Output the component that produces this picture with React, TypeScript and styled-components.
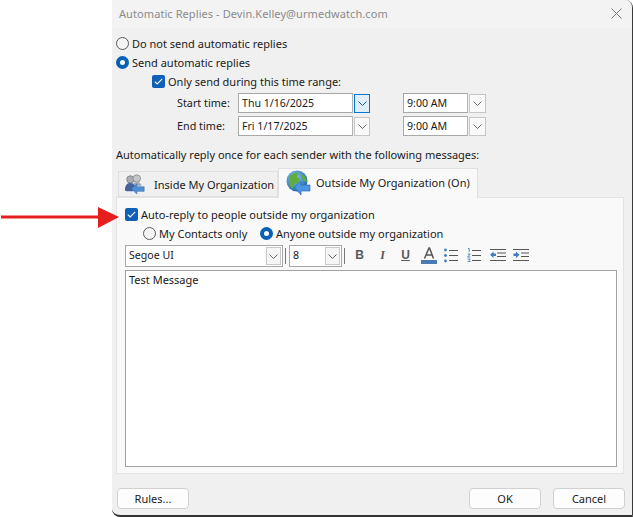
import React from "react";
import styled, { createGlobalStyle } from "styled-components";

const Global = createGlobalStyle`
  html, body { margin: 0; padding: 0; background: #fff; }
  body { width: 633px; height: 517px; overflow: hidden; font-family: "Noto Sans", "Open Sans", Arial, sans-serif; font-size: 11px; color: #1a1a1a; }
  * { box-sizing: border-box; }
`;

const Page = styled.div`
  position: relative;
  width: 633px;
  height: 517px;
  padding-left: 112px;
`;
const ArrowMark = styled.svg`
  position: absolute;
  left: 0;
  top: 205px;
`;
const Dialog = styled.div`
  width: 521px;
  height: 517px;
  background: #f0f0f0;
  border-right: 1px solid #3a3a3a;
  border-bottom: 2px solid #333;
  border-radius: 0 8px 0 8px;
  display: flex;
  flex-direction: column;
  overflow: hidden;
`;
const TitleBar = styled.div`
  height: 28px;
  flex: none;
  background: #f3f3f3;
  display: flex;
  align-items: center;
  justify-content: space-between;
  padding: 0 10px 2px 7px;
  color: #8b8b8b;
  font-size: 11px;
  letter-spacing: 0.08px;
`;
const Content = styled.div`
  padding: 6px 0 0 4px;
  flex: 1;
  display: flex;
  flex-direction: column;
`;
const OptionRow = styled.label<{ $indent?: number; $h?: number }>`
  display: flex;
  align-items: center;
  height: ${(p) => p.$h ?? 19}px;
  margin-left: ${(p) => p.$indent ?? 0}px;
  gap: 3px;
  white-space: nowrap;
`;
const RadioDot = styled.span<{ $on?: boolean }>`
  width: 13px;
  height: 13px;
  flex: none;
  border-radius: 50%;
  background: ${(p) => (p.$on ? "#fff" : "#f4f4f4")};
  border: ${(p) => (p.$on ? "4px solid #0761b5" : "1px solid #5c5c5c")};
`;
const CheckBox = styled.span`
  width: 13px;
  height: 13px;
  flex: none;
  border-radius: 2px;
  background: #0f60b6;
  display: flex;
  align-items: center;
  justify-content: center;
`;
const TimeGrid = styled.div`
  margin: 2px 0 0 61px;
  display: grid;
  grid-template-columns: 61px 115px 17px 33px 65px 18px;
  grid-auto-rows: 20px;
  row-gap: 3px;
  align-items: center;
`;
const GridLabel = styled.span`
  margin-top: -2px;
  font-size: 10.8px;
`;
const Field = styled.div`
  height: 20px;
  border: 1px solid #a8a8a8;
  border-right-color: #b4b4b4;
  background: #fff;
  display: flex;
  align-items: center;
  padding: 0 0 0 3px;
  font-size: 10.6px;
  white-space: nowrap;
`;
const DropButton = styled.div<{ $active?: boolean }>`
  height: 19px;
  margin-left: 1px;
  border: 1px solid ${(p) => (p.$active ? "#0078d7" : "#c6c6c6")};
  background: ${(p) => (p.$active ? "#e0eef9" : "#fafafa")};
  display: flex;
  align-items: center;
  justify-content: center;
`;
const Spacer = styled.div``;
const ReplyLabel = styled.div`
  height: 18px;
  margin-top: 9px;
  display: flex;
  align-items: center;
  white-space: nowrap;
`;
const TabStrip = styled.div`
  height: 30px;
  margin-top: 5px;
  padding-left: 2px;
  display: flex;
  align-items: flex-end;
  position: relative;
  z-index: 1;
  margin-bottom: -1px;
`;
const Tab = styled.div<{ $active?: boolean }>`
  display: flex;
  align-items: center;
  height: ${(p) => (p.$active ? 30 : 26)}px;
  width: ${(p) => (p.$active ? 200 : 160)}px;
  margin-bottom: ${(p) => (p.$active ? 0 : 1)}px;
  background: ${(p) => (p.$active ? "#f9f9f9" : "#f0f0f0")};
  border: 1px solid #e0e0e0;
  border-bottom: ${(p) => (p.$active ? "none" : "1px solid #e0e0e0")};
  padding: 0 0 ${(p) => (p.$active ? 2 : 0)}px ${(p) => (p.$active ? 7 : 4)}px;
  gap: ${(p) => (p.$active ? 4 : 7)}px;
  white-space: nowrap;
`;
const Panel = styled.div`
  width: 508px;
  height: 277px;
  background: #f9f9f9;
  border: 1px solid #e4e4e4;
  padding: 8px 6px 6px 8px;
  display: flex;
  flex-direction: column;
`;
const ContactRow = styled.div`
  height: 20px;
  display: flex;
  align-items: center;
  padding-left: 18px;
`;
const ContactChoice = styled.label`
  display: flex;
  align-items: center;
  gap: 3px;
  width: 117px;
  white-space: nowrap;
`;
const Toolbar = styled.div`
  height: 22px;
  margin-top: 2px;
  display: flex;
  align-items: center;
`;
const Combo = styled.div<{ $w: number }>`
  width: ${(p) => p.$w}px;
  height: 22px;
  background: #fff;
  border: 1px solid #a8a8a8;
  display: flex;
  align-items: center;
  justify-content: space-between;
  padding: 1px 1px 1px 3px;
`;
const ComboText = styled.span`
  margin-top: -2px;
  font-size: 10.6px;
`;
const ComboArrow = styled.div`
  width: 15px;
  height: 18px;
  border: 1px solid #c8c8c8;
  background: #f6f6f6;
  display: flex;
  align-items: center;
  justify-content: center;
`;
const Divider = styled.div`
  width: 1px;
  height: 16px;
  background: #777;
  margin: 0 3px 0 2px;
`;
const ToolIcon = styled.div`
  width: 23px;
  height: 22px;
  padding-bottom: 2px;
  display: flex;
  align-items: center;
  justify-content: center;
`;
const ToolLetter = styled.span<{ $italic?: boolean; $underline?: boolean }>`
  font-weight: 700;
  font-size: 12px;
  font-style: ${(p) => (p.$italic ? "italic" : "normal")};
  font-family: ${(p) => (p.$italic ? '"Liberation Serif", serif' : '"Liberation Sans", sans-serif')};
  color: #5a5a5a;
  text-decoration: ${(p) => (p.$underline ? "underline" : "none")};
`;
const Editor = styled.div`
  width: 492px;
  height: 197px;
  margin-top: 3px;
  background: #fff;
  border: 1px solid #a3a3a3;
  padding: 1px 3px;
  font-size: 11px;
  line-height: 15px;
`;
const Footer = styled.div`
  display: flex;
  justify-content: space-between;
  margin-top: 14px;
  padding: 0 7px 0 1px;
`;
const FooterGroup = styled.div`
  display: flex;
  gap: 12px;
`;
const Button = styled.button`
  width: 72px;
  height: 21px;
  padding: 0;
  border: 1px solid #d0d0d0;
  border-radius: 4px;
  background: #fdfdfd;
  color: #1a1a1a;
  font: inherit;
`;

const Chevron = ({ color = "#666" }: { color?: string }) => (
  <svg width="9" height="5" viewBox="0 0 9 5"><path d="M.5.5 4.5 4.5 8.5.5" fill="none" stroke={color} /></svg>
);
const Tick = () => (
  <svg width="9" height="7" viewBox="0 0 9 7"><path d="M.8 3.6 3.2 6 8.2.8" fill="none" stroke="#fff" strokeWidth="1.1" /></svg>
);
const ListLines = ({ x = 5 }: { x?: number }) => (
  <path d={`M${x} 2.5H14M${x} 7.5H14M${x} 12.5H14`} stroke="#555" strokeWidth="1" fill="none" />
);
const PeopleIcon = () => (
  <svg width="24" height="22" viewBox="0 0 26 24">
    <circle cx="8" cy="7" r="4" fill="#a9adb3" stroke="#7f8389" />
    <circle cx="15" cy="6" r="4" fill="#c4c6c9" stroke="#8d9096" />
    <path d="M2 19c0-6 3-8 6-8s5 2 6 5l-3 4H4z" fill="#47629f" />
    <path d="M11 12c1-2 3-2 5-2s4 2 4 4h-6z" fill="#9da6b5" />
    <path d="M9 17l6-5v3h8v5h-8v3z" fill="#4f8fd6" stroke="#2f6cae" strokeWidth=".6" />
  </svg>
);
const GlobeIcon = () => (
  <svg width="26" height="26" viewBox="0 0 26 26">
    <defs>
      <radialGradient id="gl" cx=".4" cy=".35" r=".7">
        <stop offset="0" stopColor="#8fd0f2" />
        <stop offset="1" stopColor="#1b62a8" />
      </radialGradient>
    </defs>
    <circle cx="11" cy="11" r="10.5" fill="url(#gl)" />
    <path d="M3 7c3-4 7-5 9-4l-1 4 3 2-2 4-4 1-1 5-3-3-1-5z" fill="#5fae3c" />
    <path d="M16 4l4 4 1 4-3-1-2-3z" fill="#5fae3c" />
    <path d="M8 17l7-6v4h9v6h-9v4z" fill="#4b94e0" stroke="#2e6db3" strokeWidth=".7" />
  </svg>
);

export default function App() {
  return (
    <Page>
      <Global />
      <ArrowMark width="120" height="24" viewBox="0 0 120 24">
        <path d="M1 10.5H98V2L119 12 98 23V13.5H1z" fill="#e61e1e" />
      </ArrowMark>
      <Dialog>
        <TitleBar>
          <span>Automatic Replies - Devin.Kelley@urmedwatch.com</span>
          <svg width="11" height="11" viewBox="0 0 11 11"><path d="M.5.5 10.5 10.5M10.5.5.5 10.5" stroke="#777" fill="none" /></svg>
        </TitleBar>
        <Content>
          <OptionRow><RadioDot />Do not send automatic replies</OptionRow>
          <OptionRow><RadioDot $on />Send automatic replies</OptionRow>
          <OptionRow $indent={36}><CheckBox><Tick /></CheckBox>Only send during this time range:</OptionRow>
          <TimeGrid>
            <GridLabel>Start time:</GridLabel>
            <Field>Thu 1/16/2025</Field>
            <DropButton $active><Chevron color="#0a5a9c" /></DropButton>
            <Spacer />
            <Field>9:00 AM</Field>
            <DropButton><Chevron /></DropButton>
            <GridLabel>End time:</GridLabel>
            <Field>Fri 1/17/2025</Field>
            <DropButton><Chevron /></DropButton>
            <Spacer />
            <Field>9:00 AM</Field>
            <DropButton><Chevron /></DropButton>
          </TimeGrid>
          <ReplyLabel>Automatically reply once for each sender with the following messages:</ReplyLabel>
          <TabStrip>
            <Tab><PeopleIcon />Inside My Organization</Tab>
            <Tab $active><GlobeIcon />Outside My Organization (On)</Tab>
          </TabStrip>
          <Panel>
            <OptionRow $h={17}><CheckBox><Tick /></CheckBox>Auto-reply to people outside my organization</OptionRow>
            <ContactRow>
              <ContactChoice><RadioDot />My Contacts only</ContactChoice>
              <ContactChoice><RadioDot $on />Anyone outside my organization</ContactChoice>
            </ContactRow>
            <Toolbar>
              <Combo $w={158}><ComboText>Segoe UI</ComboText><ComboArrow><Chevron /></ComboArrow></Combo>
              <Divider />
              <Combo $w={53}><ComboText>8</ComboText><ComboArrow><Chevron /></ComboArrow></Combo>
              <Divider />
              <ToolIcon><ToolLetter>B</ToolLetter></ToolIcon>
              <ToolIcon><ToolLetter $italic>I</ToolLetter></ToolIcon>
              <ToolIcon><ToolLetter $underline>U</ToolLetter></ToolIcon>
              <ToolIcon>
                <svg width="16" height="17" viewBox="0 0 16 17">
                  <path d="M3.5 11.5 8 1h.5l4 10.5M5 8h6" fill="none" stroke="#555" strokeWidth="1.5" />
                  <rect x="0" y="13" width="16" height="4" fill="#4a7ab5" />
                </svg>
              </ToolIcon>
              <ToolIcon>
                <svg width="15" height="15" viewBox="0 0 15 15">
                  <ListLines />
                  <circle cx="1.5" cy="2" r="1.4" fill="#3f7fc0" /><circle cx="1.5" cy="7.5" r="1.4" fill="#3f7fc0" /><circle cx="1.5" cy="13" r="1.4" fill="#3f7fc0" />
                </svg>
              </ToolIcon>
              <ToolIcon>
                <svg width="15" height="15" viewBox="0 0 15 15">
                  <ListLines />
                  <path d="M1 .5h1.2v3.5M.6 6h2.6l-2.6 3h2.8M.6 11h2.6l-1 1.3 1 1.3H.6" fill="none" stroke="#3f7fc0" strokeWidth=".9" />
                </svg>
              </ToolIcon>
              <ToolIcon>
                <svg width="16" height="15" viewBox="0 0 16 15">
                  <path d="M0 1.5H16M7 5H16M7 8.5H16M0 12.5H16" stroke="#555" fill="none" />
                  <path d="M0 6.8 3.5 3.5v2H6v2.6H3.5v2z" fill="#3f7fc0" />
                </svg>
              </ToolIcon>
              <ToolIcon>
                <svg width="16" height="15" viewBox="0 0 16 15">
                  <path d="M0 1.5H16M8 5H16M8 8.5H16M0 12.5H16" stroke="#555" fill="none" />
                  <path d="M6.5 6.8 3 3.5v2H.5v2.6H3v2z" fill="#3f7fc0" />
                </svg>
              </ToolIcon>
            </Toolbar>
            <Editor>Test Message</Editor>
          </Panel>
          <Footer>
            <Button>Rules...</Button>
            <FooterGroup>
              <Button>OK</Button>
              <Button>Cancel</Button>
            </FooterGroup>
          </Footer>
        </Content>
      </Dialog>
    </Page>
  );
}
